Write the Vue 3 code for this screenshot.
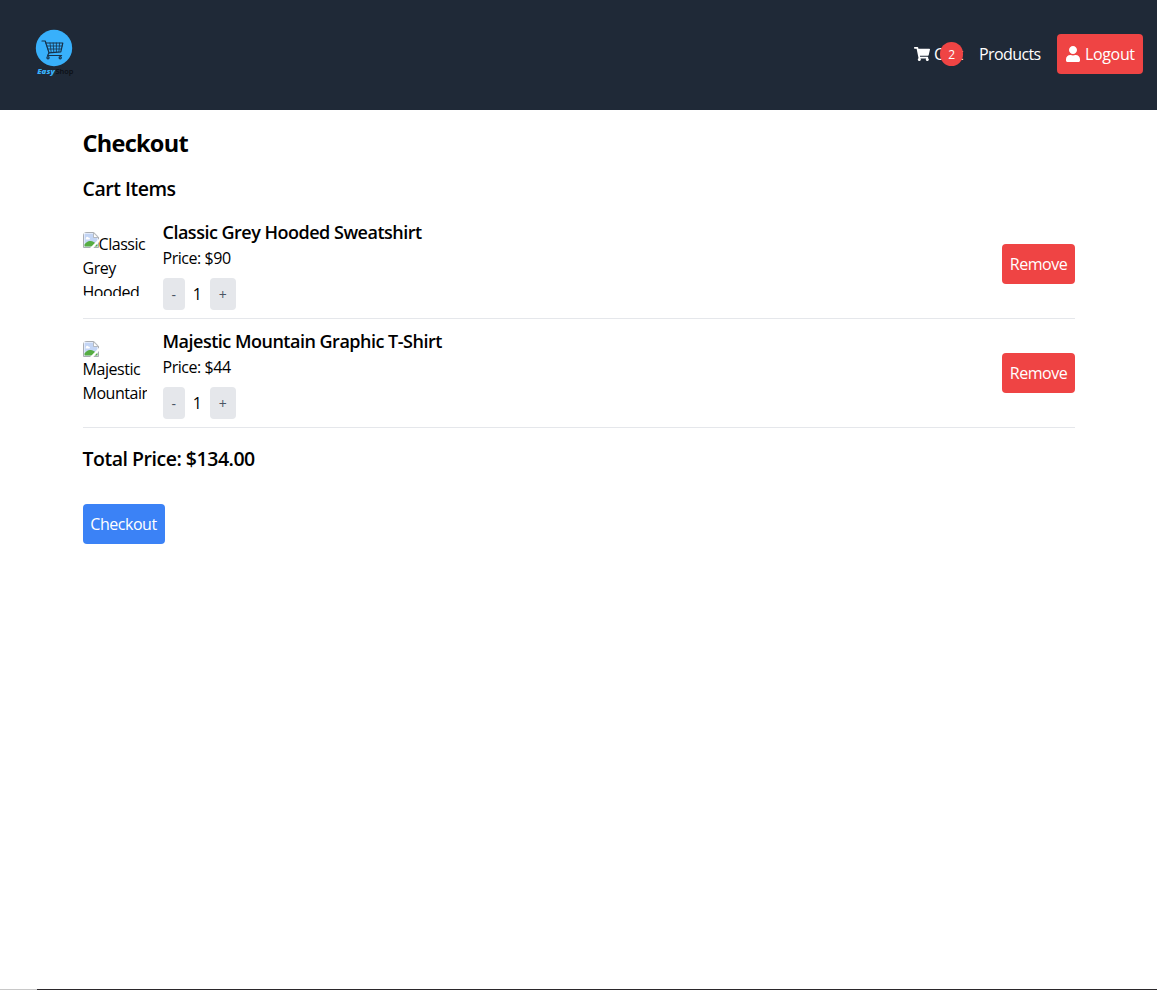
<script setup>
import { reactive, computed } from 'vue'

const items = reactive([
  { name: 'Classic Grey Hooded Sweatshirt', price: 90, qty: 1, alt: ['Classic', 'Grey', 'Hooded'], inlineIcon: true },
  { name: 'Majestic Mountain Graphic T-Shirt', price: 44, qty: 1, alt: ['Majestic', 'Mountain'], inlineIcon: false },
])
const total = computed(() => items.reduce((sum, i) => sum + i.price * i.qty, 0).toFixed(2))
const remove = (i) => items.splice(i, 1)
</script>

<template>
  <div class="page">
    <header class="header">
      <svg class="logo" viewBox="0 0 64 64" width="64" height="64">
        <circle cx="30" cy="28" r="18.2" fill="#38b0fb" />
        <g fill="none" stroke="#17324b" stroke-width="1.2" stroke-linecap="round" stroke-linejoin="round">
          <path d="M18 21h3.200l3.800 11.800-1.400 2.700h14" />
          <path d="M21.800 23h17l-2 8.800-11.800 1" />
          <path d="M22.700 26h15.500M23.700 29h13.900M26 23l1.200 9.400M29.200 23l.6 9.200M32.400 23v9M35.600 23l-.7 8.800" stroke-width=".8" />
          <circle cx="24" cy="37.800" r="1.100" />
          <circle cx="36.200" cy="37.800" r="1.100" />
        </g>
        <text x="13.2" y="54" class="easy" textLength="17.5" lengthAdjust="spacingAndGlyphs">Easy</text>
        <text x="31.500" y="54" class="shop" textLength="18" lengthAdjust="spacingAndGlyphs">Shop</text>
      </svg>
      <nav class="nav">
        <a class="cart">
          <svg class="icon" viewBox="0 0 576 512" width="16" height="16" fill="#fff">
            <path d="M528.12 301.319l47.273-208C578.806 78.301 567.391 64 551.99 64H159.208l-9.166-44.81C147.758 8.021 137.93 0 126.529 0H24C10.745 0 0 10.745 0 24v16c0 13.255 10.745 24 24 24h69.883l70.248 343.435C147.325 417.1 136 435.222 136 456c0 30.928 25.072 56 56 56s56-25.072 56-56c0-15.674-6.447-29.835-16.824-40h209.647C430.447 426.165 424 440.326 424 456c0 30.928 25.072 56 56 56s56-25.072 56-56c0-22.172-12.888-41.332-31.579-50.405l5.517-24.276c3.413-15.018-8.002-29.319-23.403-29.319H218.117l-6.545-32h293.145c11.206 0 20.92-7.754 23.403-18.681z" />
          </svg>
          <span class="cart-label">Cart</span>
          <span class="badge">2</span>
        </a>
        <a class="products">Products</a>
        <button class="btn red logout">
          <svg class="icon" viewBox="0 0 448 512" width="16" height="16" fill="#fff">
            <path d="M224 256c70.7 0 128-57.3 128-128S294.700 0 224 0 96 57.300 96 128s57.300 128 128 128zm89.600 32h-16.700c-22.200 10.200-46.900 16-72.900 16s-50.600-5.800-72.900-16h-16.700C60.200 288 0 348.200 0 422.400V464c0 26.500 21.500 48 48 48h352c26.500 0 48-21.500 48-48v-41.600c0-74.200-60.200-134.400-134.400-134.400z" />
          </svg>
          <span>Logout</span>
        </button>
      </nav>
    </header>

    <main class="container">
      <h1>Checkout</h1>
      <h2>Cart Items</h2>
      <ul>
        <li v-for="(item, i) in items" :key="item.name">
          <div class="thumb" :class="{ stacked: !item.inlineIcon }">
            <svg class="broken" viewBox="0 0 16 16" width="16" height="16">
              <path d="M.5 .5h10.300l4.700 4.700v10.300H.5z" fill="#fff" stroke="#a9adb3" />
              <path d="M1.500 1.500h9l4 4v9h-13z" fill="#c3d5f5" />
              <path d="M3 6.200c0-1.300 1.700-1.800 2.400-.8 1.500-.2 2.200 1.800.8 2.200H3.500C2.500 7.600 2.200 6.600 3 6.200z" fill="#fff" />
              <path d="M1.500 14.500v-2c2-2.600 4-4 6.500-3.400 2.500.5 4.500 2.400 6.500 3.400v2z" fill="#56ad43" />
              <path d="M16 6.800v3.300L10.300 16H7z" fill="#fff" />
              <path d="M10.500 .8v4.700h4.700z" fill="#fff" stroke="#a9adb3" stroke-width=".8" />
            </svg>
            <span v-for="word in item.alt" :key="word" class="word">{{ word }}</span>
          </div>
          <div class="info">
            <h3>{{ item.name }}</h3>
            <p>Price: ${{ item.price }}</p>
            <div class="qty">
              <button class="step minus" @click="item.qty > 1 && item.qty--">-</button>
              <span>{{ item.qty }}</span>
              <button class="step plus" @click="item.qty++">+</button>
            </div>
          </div>
          <button class="btn red remove" @click="remove(i)">Remove</button>
        </li>
      </ul>
      <div class="total">Total Price: ${{ total }}</div>
      <button class="btn blue">Checkout</button>
    </main>
    <footer class="edge"></footer>
  </div>
</template>

<style>
body { margin: 0; background: #fff; }
</style>

<style scoped>
* { box-sizing: border-box; }
.page {
  height: 990px;
  display: flex;
  flex-direction: column;
  overflow: hidden;
  font: 16px/24px "Segoe UI", "Open Sans", "Noto Sans", sans-serif;
  letter-spacing: -0.45px;
  color: #000;
}
h1, h2, h3, p, ul { margin: 0; padding: 0; list-style: none; }
button { font: inherit; letter-spacing: inherit; border: 0; padding: 0; }
.header {
  height: 110px;
  flex: none;
  background: #1f2937;
  display: flex;
  justify-content: space-between;
  padding: 20px 14px 0 24px;
}
.easy { font: italic 800 7px "Open Sans", sans-serif; letter-spacing: 0; fill: #38b0fb; }
.shop { font: 600 7px "Open Sans", sans-serif; letter-spacing: 0; fill: #0b0f15; }
.nav { display: flex; align-items: center; gap: 16px; height: 40px; margin-top: 14px; color: #fff; }
.icon { flex: none; }
.cart { position: relative; display: flex; align-items: center; gap: 4px; width: 49px; }
.cart-label { letter-spacing: -0.7px; }
.badge {
  position: absolute;
  right: 0;
  top: 0;
  width: 23px;
  height: 24px;
  border-radius: 12px;
  background: #ef4444;
  font-size: 12px;
  line-height: 25px;
  text-align: center;
}
.products { width: 62px; letter-spacing: -0.6px; }
.btn { height: 40px; border-radius: 4px; color: #fff; white-space: nowrap; }
.red { background: #ef4444; }
.blue { background: #3b82f6; width: 82px; margin-top: 32px; }
.logout { width: 86px; display: flex; align-items: center; padding: 0 0 0 8px; gap: 4px; letter-spacing: -0.35px; }
.remove { width: 73px; margin-left: auto; }
.container { width: 1024px; margin: 0 auto; padding: 16px 15.500px 0 16px; flex: 1; }
h1 { font-size: 23.500px; line-height: 32px; font-weight: 700; letter-spacing: -0.72px; margin-bottom: 16px; padding-top: 1px; height: 32px; }
h2, .total { font-size: 19.500px; line-height: 28px; height: 28px; padding-top: 1px; font-weight: 550; letter-spacing: -0.48px; }
h2 { margin-bottom: 8px; }
li { display: flex; align-items: center; height: 109px; border-bottom: 1px solid #e5e7eb; }
.thumb { width: 64px; height: 64px; margin-right: 16px; overflow: hidden; border-radius: 4px; flex: none; }
.broken { float: left; }
.word { display: block; }
.stacked .broken { float: none; display: block; }
.stacked .word { letter-spacing: -0.45px; }
h3 { font-size: 18px; line-height: 28px; font-weight: 550; letter-spacing: -0.5px; }
.qty { display: flex; align-items: center; margin-top: 8px; }
.qty span { width: 25px; text-align: center; }
.step { height: 32px; padding-top: 2px; border-radius: 4px; background: #e5e7eb; color: #4b5563; font-size: 14px; }
.minus { width: 22px; }
.plus { width: 26px; }
.total { margin-top: 16px; }
.edge { height: 1px; flex: none; background: linear-gradient(90deg, #c8c8c8 37px, #2b282b 37px); }
</style>
